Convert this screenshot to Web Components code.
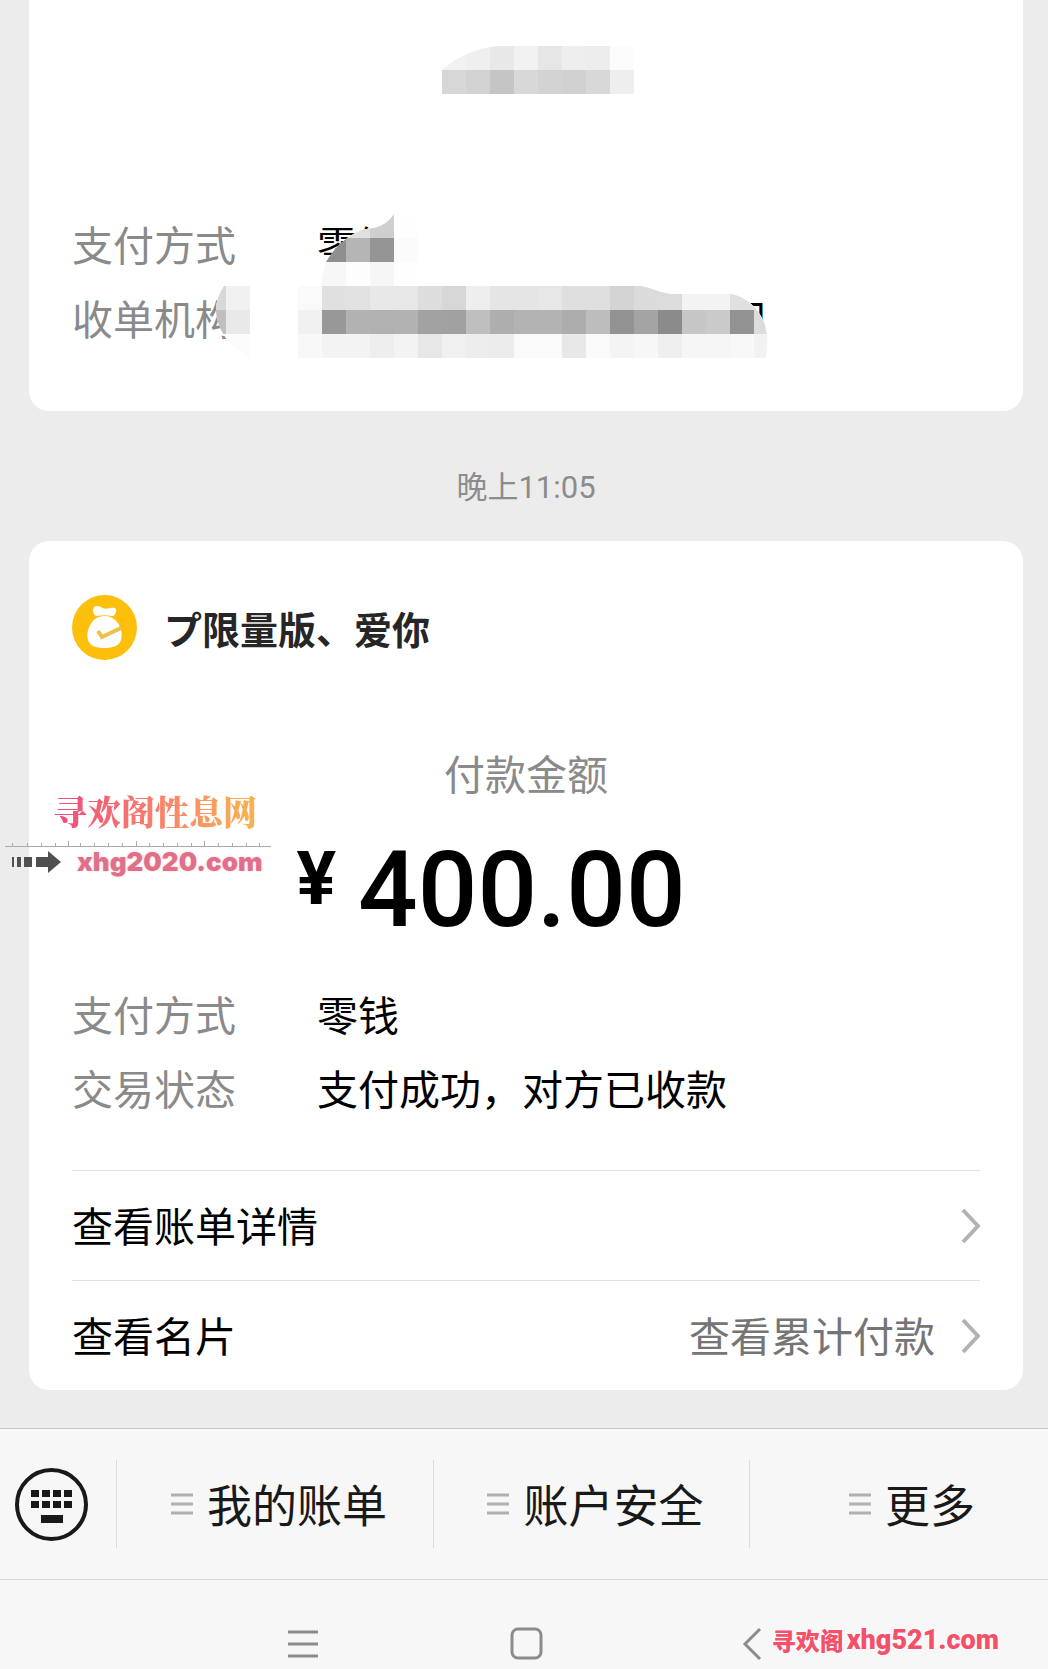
<!DOCTYPE html>
<html lang="zh-CN">
<head>
<meta charset="utf-8">
<meta name="viewport" content="width=device-width, initial-scale=1">
<title>支付消息</title>
<style>
  body {
    margin: 0;
    background: #ececec;
    color: #000;
    font-family: "Noto Sans CJK SC", sans-serif;
  }
</style>
</head>
<body>
<pay-chat></pay-chat>

<script>
const define = (name, html) => customElements.define(name, class extends HTMLElement {
  connectedCallback() {
    if (this.shadowRoot) return;
    this.attachShadow({ mode: 'open' }).innerHTML = html(this);
  }
});

define('message-card', () => `
  <style>
    :host {
      display: block;
      position: relative;
      box-sizing: border-box;
      padding: 0 43px;
      background: #fff;
      border-radius: 20px;
    }
    :host([cut]) { border-radius: 0 0 20px 20px; padding-top: 206px; padding-bottom: 57px; }
  </style>
  <slot></slot>
`);

define('detail-list', () => `
  <style>
    :host { display: block; }
    dl { margin: 0; }
  </style>
  <dl><slot></slot></dl>
`);

define('detail-item', el => `
  <style>
    :host { display: flex; font-size: 41px; line-height: 74px; white-space: nowrap; }
    dt { width: 245px; color: #8a8a8a; }
    dd { margin: 0; }
    :host([masked]) dd { width: 450px; text-align: right; }
  </style>
  <dt>${el.getAttribute('label')}</dt>
  <dd><slot></slot></dd>
`);

// Rows of grey tiles, two hex digits each
const tiles = (x, y, rows) => rows.map((row, r) =>
  row.split(' ').map((g, c) =>
    `<rect x="${x + c * 24}" y="${y + r * 24}" width="24" height="24" fill="#${g + g + g}"/>`
  ).join('')).join('');

define('mosaic-mask', () => `
  <style>
    :host { position: absolute; left: 0; top: 0; pointer-events: none; }
    svg { display: block; }
  </style>
  <svg width="994" height="411" viewBox="29 0 994 411" aria-hidden="true">
    <defs>
      <clipPath id="amount"><path d="M442 70Q467 48 500 46H634V94H442Z"/></clipPath>
      <clipPath id="detail">
        <path d="M394 214Q387 225 374 228C360 229 354 233 346 239Q335 247 326 262L320 286H418V214Z"/>
        <path d="M224 286Q211 305 219 325Q226 345 250 358H765Q770 345 765 325C759 306 742 295 730 294H670C655 291 650 287 640 286Z"/>
      </clipPath>
    </defs>
    <g clip-path="url(#amount)" shape-rendering="crispEdges">${tiles(442, 46, [
      'f1 ef e8 f2 e6 ee ed fc',
      'd7 d2 c5 d8 d3 d1 d8 ee'
    ])}</g>
    <g clip-path="url(#detail)" shape-rendering="crispEdges">
      <path fill="#fff" d="M200 200H780V360H200Z"/>
      ${tiles(322, 214, [
        'd5 e0 cf fe',
        '8f b5 95 fb',
        'f7 fd f6 fe'
      ])}
      ${tiles(202, 286, [
        'd8 f1 ff ff fa e0 e1 e8 e7 dd d7 ee e5 e5 e7 df df d4 db dc f3 f3 e0 e0',
        'bf e9 ff ff f1 98 b2 b1 b2 a2 a1 bf ae b3 b3 ad bd 93 a4 8b c6 ca 93 dc',
        'fc fc ff ff f8 f3 f3 ee f3 e7 f0 ed ec fa fa e8 fa f4 f7 ef f6 f6 f8 f2'
      ])}
    </g>
  </svg>
`);

define('time-stamp', () => `
  <style>
    :host {
      display: block;
      padding: 24px 0 0;
      text-align: center;
      font: 31px/106px Roboto, "Noto Sans CJK SC", sans-serif;
      color: #8c8c8c;
    }
    time { display: block; height: 106px; }
  </style>
  <time><slot></slot></time>
`);

define('payee-header', () => `
  <style>
    :host { display: flex; align-items: center; gap: 27px; padding-top: 54px; }
    svg { flex: none; }
    h2 { margin: 0; font-size: 38px; line-height: 65px; font-weight: 700; color: #262626; }
  </style>
  <svg width="65" height="65" viewBox="0 0 65 65" aria-hidden="true">
    <circle cx="32.5" cy="32.5" r="32.5" fill="#fcc00c"/>
    <path fill="#fff" d="M21 14c1-3 4-4 8-2 3 2 5 2 9 1 5-1 7 0 6 4-1 3-2 4-4 4-6-1-10-1-15 0-3 0-4-4-4-7Z"/>
    <path fill="#fff" d="M23 24c6-4 14-4 19 0 7 6 9 14 7 21-2 6-8 8-17 8s-15-3-16-8c-2-7 1-16 7-21Z"/>
    <path fill="none" stroke="#eec04a" stroke-width="4" d="m26 36 4 6 19-9"/>
  </svg>
  <h2><slot></slot></h2>
`);

define('pay-amount', el => `
  <style>
    :host { display: block; padding-top: 89px; text-align: center; }
    p { margin: 0; }
    .caption { font-size: 41px; line-height: 46px; color: #8a8a8a; }
    .amount {
      display: flex;
      justify-content: center;
      align-items: flex-start;
      gap: 22px;
      padding: 44px 70px 33px 0;
      font-family: Roboto, "Liberation Sans", sans-serif;
      font-weight: 700;
    }
    .sign { font-size: 74px; line-height: 80px; }
    .value { font-size: 105px; line-height: 104px; font-weight: 500; }
  </style>
  <p class="caption">${el.getAttribute('caption')}</p>
  <p class="amount"><span class="sign">¥</span><span class="value"><slot></slot></span></p>
`);

define('card-links', () => `
  <style>
    :host { display: block; margin-top: 46px; }
  </style>
  <slot></slot>
`);

define('card-link', el => `
  <style>
    :host { display: block; border-top: 1px solid #e2e2e2; }
    a {
      display: flex;
      align-items: center;
      height: 109px;
      color: #000;
      font-size: 41px;
      line-height: 60px;
      text-decoration: none;
    }
    span { padding-bottom: 4px; }
    .note { margin-left: auto; color: #757575; }
    svg { margin-left: 25px; }
  </style>
  <a href="#${el.getAttribute('to')}">
    <span><slot></slot></span>
    <span class="note">${el.getAttribute('note') || ''}</span>
    <svg width="20" height="38" viewBox="0 0 20 38" fill="none" stroke="#b2b2b2" stroke-width="4" aria-hidden="true"><path d="m3 3 15 16L3 35"/></svg>
  </a>
`);

define('menu-bar', () => `
  <style>
    :host {
      display: flex;
      align-items: center;
      height: 150px;
      background: #f7f7f7;
      border-top: 1px solid #c8c8c8;
    }
    button {
      width: 116px;
      padding: 0 0 0 14px;
      border: 0;
      background: none;
      text-align: left;
    }
    svg { display: block; }
    nav { flex: 1; display: grid; grid-template-columns: 317fr 316fr 299fr; }
  </style>
  <button type="button" aria-label="键盘">
    <svg width="75" height="75" viewBox="0 0 75 75">
      <circle cx="37.5" cy="37.5" r="34.5" fill="none" stroke="#191919" stroke-width="4"/>
      <path fill="#191919" d="M17 23h8v7h-8zm11 0h8v7h-8zm11 0h8v7h-8zm11 0h8v7h-8zM17 34h8v7h-8zm11 0h8v7h-8zm11 0h8v7h-8zm11 0h8v7h-8zM27 48h22v8H27z"/>
    </svg>
  </button>
  <nav><slot></slot></nav>
`);

define('menu-item', () => `
  <style>
    :host { display: block; border-left: 1px solid #dcdcdc; }
    button {
      display: flex;
      align-items: center;
      justify-content: center;
      gap: 14px;
      width: 100%;
      height: 88px;
      padding: 0 0 0 8px;
      border: 0;
      background: none;
      color: #191919;
      font: 45px/60px "Noto Sans CJK SC", sans-serif;
      white-space: nowrap;
    }
    :host(:last-child) button { padding-left: 26px; }
  </style>
  <button type="button">
    <svg width="22" height="22" viewBox="0 0 22 22" stroke="#b0b0b0" stroke-width="3" aria-hidden="true"><path d="M0 2h22M0 11h22M0 20h22"/></svg>
    <span><slot></slot></span>
  </button>
`);

define('system-nav', () => `
  <style>
    :host {
      display: flex;
      justify-content: center;
      gap: 188px;
      height: 89px;
      padding-left: 5px;
      background: #f7f7f7;
      border-top: 1px solid #d6d6d6;
    }
    button { width: 36px; padding: 38px 0 0; border: 0; background: none; }
    svg { display: block; }
  </style>
  <button type="button" aria-label="任务">
    <svg width="36" height="51" viewBox="0 0 36 51" stroke="#8c8c8c" stroke-width="3"><path d="M3 14h30M3 26h30M3 38h30"/></svg>
  </button>
  <button type="button" aria-label="主页">
    <svg width="36" height="51" viewBox="0 0 36 51" fill="none" stroke="#8c8c8c" stroke-width="3"><rect x="3" y="11" width="29" height="29" rx="6"/></svg>
  </button>
  <button type="button" aria-label="返回">
    <svg width="36" height="51" viewBox="0 0 36 51" fill="none" stroke="#8c8c8c" stroke-width="3"><path d="M27 11 12 26l15 15"/></svg>
  </button>
`);

define('ruler-stamp', el => `
  <style>
    :host { position: absolute; left: 5px; top: 788px; width: 268px; pointer-events: none; }
    p { margin: 0; white-space: nowrap; }
    .title {
      width: max-content;
      margin-left: 48px;
      padding-bottom: 2px;
      font: 900 34px/46px "Noto Serif CJK SC", "Noto Sans CJK SC", serif;
      background: linear-gradient(90deg, #ee4a7c, #fa7f6c 50%, #f8b450);
      -webkit-background-clip: text;
      background-clip: text;
      color: transparent;
    }
    svg { display: block; flex: none; }
    .site { display: flex; align-items: center; gap: 16px; padding-left: 7px; }
    .site p { font: 900 26px/28px Inter, "Liberation Sans", sans-serif; color: #e0708a; text-shadow: 0 0 3px #fbd5d5; }
  </style>
  <p class="title">${el.getAttribute('title-text')}</p>
  <svg width="266" height="12" viewBox="0 0 266 12" fill="none" stroke="#aaa" aria-hidden="true">
    <path d="M0 10.500H266M7.500 7v4M22.500 7v4M36.500 7v4M50.500 7v4M63.500 5v6M75.500 7v4M89.500 7v4M103.500 7v4M117.500 7v4M131.500 5v6M144.500 7v4M158.500 7v4M172.500 7v4M186.500 7v4M199.500 5v6M213.500 7v4M227.500 7v4M241.500 7v4M254.500 7v4"/>
  </svg>
  <div class="site">
    <svg width="49" height="22" viewBox="0 0 49 22" fill="#505050" aria-hidden="true">
      <path d="M0 6h2v10H0zM5 6h4v10H5zM12 6h8v10h-8zM24 6h12V0l13 11-13 11v-6H24z"/>
    </svg>
    <p><slot></slot></p>
  </div>
`);

define('corner-stamp', () => `
  <style>
    :host {
      display: flex;
      gap: 3px;
      position: absolute;
      right: 49px;
      bottom: 11px;
      font: 900 27px/36px Roboto, "Liberation Sans", sans-serif;
      color: #f4506a;
      white-space: nowrap;
      text-shadow: 0 0 3px #fff, 0 0 3px #fff;
      pointer-events: none;
    }
    ::slotted(b) { font: 900 24px/36px "Noto Sans CJK SC", sans-serif; }
  </style>
  <slot></slot>
`);

define('pay-chat', () => `
  <style>
    :host { display: block; position: relative; }
    main { padding: 0 25px 38px 29px; }
  </style>
  <main>
    <message-card cut>
      <detail-list>
        <detail-item label="支付方式">零钱</detail-item>
        <detail-item label="收单机构" masked>司</detail-item>
      </detail-list>
      <mosaic-mask></mosaic-mask>
    </message-card>
    <time-stamp>晚上11:05</time-stamp>
    <message-card>
      <payee-header>プ限量版、爱你</payee-header>
      <pay-amount caption="付款金额">400.00</pay-amount>
      <detail-list>
        <detail-item label="支付方式">零钱</detail-item>
        <detail-item label="交易状态">支付成功，对方已收款</detail-item>
      </detail-list>
      <card-links>
        <card-link to="bill">查看账单详情</card-link>
        <card-link to="profile" note="查看累计付款">查看名片</card-link>
      </card-links>
    </message-card>
  </main>
  <menu-bar>
    <menu-item>我的账单</menu-item>
    <menu-item>账户安全</menu-item>
    <menu-item>更多</menu-item>
  </menu-bar>
  <system-nav></system-nav>
  <ruler-stamp title-text="寻欢阁性息网">xhg2020.com</ruler-stamp>
  <corner-stamp><b>寻欢阁</b>xhg521.com</corner-stamp>
`);
</script>
</body>
</html>
